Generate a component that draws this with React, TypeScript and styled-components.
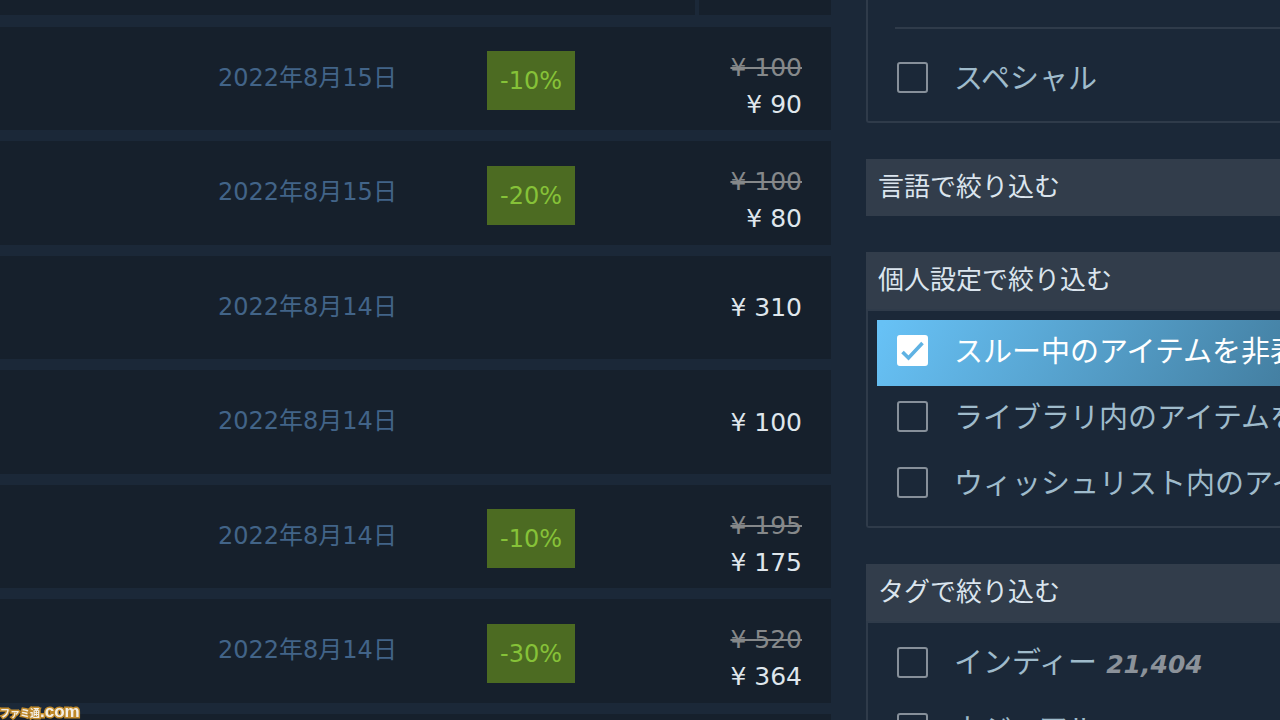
import React from 'react';
import styled, { createGlobalStyle } from 'styled-components';

const GlobalStyle = createGlobalStyle`
  *, *::before, *::after { box-sizing: border-box; }
  body {
    margin: 0;
    background: #1b2838;
    font-family: "DejaVu Sans", "Noto Sans CJK JP", sans-serif;
  }
`;

const Page = styled.div`
  display: flex;
  gap: 35px;
  height: 100vh;
  overflow: hidden;
`;

const Results = styled.main`
  flex: 1;
  min-width: 0;
`;

const Toolbar = styled.div`
  display: flex;
  gap: 4px;
  height: 15px;
  margin-bottom: 12px;
`;

const ToolbarPart = styled.div<{ $narrow?: boolean }>`
  flex: ${(p) => (p.$narrow ? '0 0 132px' : '1')};
  background: #16202c;
`;

const ResultList = styled.ul`
  display: flex;
  flex-direction: column;
  gap: 11px;
  margin: 0;
  padding: 0;
  list-style: none;
`;

const ResultRow = styled.a`
  display: grid;
  grid-template-columns: 218fr 269px 88px 227fr;
  align-items: center;
  min-height: 103px;
  padding-right: 29px;
  background: #16202c;
  text-decoration: none;

  li:nth-child(even) > & { min-height: 104px; }
`;

const ReleaseDate = styled.time`
  grid-column: 2;
  padding-bottom: 2px;
  color: #426488;
  font-size: 24px;
  line-height: 32px;
  white-space: nowrap;
`;

const Discount = styled.span`
  grid-column: 3;
  margin-top: 4px;
  padding-top: 2px;
  background: #4c6b22;
  color: #86c238;
  font-size: 24px;
  line-height: 57px;
  text-align: center;
`;

const Prices = styled.div<{ $discounted: boolean }>`
  grid-column: 4;
  display: flex;
  flex-direction: column;
  padding-top: ${(p) => (p.$discounted ? '14px' : '0')};
  font-size: 25px;
  line-height: 37px;
  text-align: right;
  white-space: nowrap;
`;

const OldPrice = styled.s`
  color: #85888a;
  text-decoration-thickness: 2px;
`;

const Price = styled.span`
  color: #dfe6ec;
`;

const Sidebar = styled.aside`
  flex: 0 0 414px;
  min-width: 0;
  overflow: hidden;
`;

const FilterGroup = styled.section`
  margin-bottom: 36px;
`;

const FilterTitle = styled.h2`
  margin: 0;
  padding: 0 12px;
  background: #323d4b;
  color: #dbe5ee;
  font-size: 26px;
  font-weight: 400;
  line-height: 57px;
  white-space: nowrap;
`;

const FilterBody = styled.div<{ $continued?: boolean }>`
  padding: ${(p) => (p.$continued ? '27px 0 8px 9px' : '9px 0 8px 9px')};
  border: 2px solid #2f3b4a;
  border-right: 0;
  border-top-width: ${(p) => (p.$continued ? '0' : '2px')};
  border-bottom-left-radius: 3px;
`;

const Divider = styled.hr`
  height: 2px;
  margin: 0 0 18px 18px;
  border: 0;
  background: #2f3b4a;
`;

const Option = styled.label<{ $active: boolean }>`
  display: flex;
  align-items: center;
  gap: 26px;
  height: 66px;
  padding: 0 0 6px 20px;
  background: ${(p) => (p.$active ? 'linear-gradient(120deg, #67c1f5 2%, #417a9b 108%)' : 'none')};
  color: ${(p) => (p.$active ? '#ffffff' : '#9fbbcb')};
  font-size: 29px;
  line-height: 40px;
  white-space: nowrap;
`;

const OptionText = styled.span`
  padding-top: 4px;
`;

const CheckHolder = styled.span`
  position: relative;
  flex: none;
  width: 31px;
  height: 31px;
`;

const CheckInput = styled.input`
  display: block;
  width: 31px;
  height: 31px;
  margin: 0;
  appearance: none;
  border: 2px solid #87909a;
  border-radius: 3px;

  &:checked {
    border-color: #ffffff;
    background: #ffffff;
  }
`;

const Tick = styled.svg`
  position: absolute;
  inset: 0;
  pointer-events: none;
`;

const Count = styled.em`
  color: #8b929a;
  font-size: 25px;
  font-weight: 700;
`;

const Watermark = styled.div`
  position: fixed;
  bottom: 0;
  left: 0;
  display: flex;
  align-items: baseline;
  height: 17px;
  color: #f3efe6;
  font-family: "Liberation Sans", "Noto Sans CJK JP", sans-serif;
  font-weight: 700;
  line-height: 18px;
  -webkit-text-stroke: 3px #c08a2c;
  paint-order: stroke fill;
`;

const WatermarkPart = styled.span<{ $size: number }>`
  font-size: ${(p) => p.$size}px;
`;

type Item = { date: string; iso: string; discount?: string; old?: string; price?: string };

const items: Item[] = [
  { date: '2022年8月15日', iso: '2022-08-15', discount: '-10%', old: '¥ 100', price: '¥ 90' },
  { date: '2022年8月15日', iso: '2022-08-15', discount: '-20%', old: '¥ 100', price: '¥ 80' },
  { date: '2022年8月14日', iso: '2022-08-14', price: '¥ 310' },
  { date: '2022年8月14日', iso: '2022-08-14', price: '¥ 100' },
  { date: '2022年8月14日', iso: '2022-08-14', discount: '-10%', old: '¥ 195', price: '¥ 175' },
  { date: '2022年8月14日', iso: '2022-08-14', discount: '-30%', old: '¥ 520', price: '¥ 364' },
];

function CheckOption({ text, count, checked = false }: { text: string; count?: string; checked?: boolean }) {
  const [on, setOn] = React.useState(checked);
  return (
    <Option $active={on}>
      <CheckHolder>
        <CheckInput type="checkbox" checked={on} onChange={(e) => setOn(e.target.checked)} />
        {on && (
          <Tick viewBox="0 0 31 31" width="31" height="31" aria-hidden="true">
            <path d="M5.5 17 L11.5 23 L25.5 8" fill="none" stroke="#5fb2e3" strokeWidth="3.6" />
          </Tick>
        )}
      </CheckHolder>
      <OptionText>
        {text}
        {count && <> <Count>{count}</Count></>}
      </OptionText>
    </Option>
  );
}

export default function App() {
  return (
    <>
      <GlobalStyle />
      <Page lang="ja">
        <Results>
          <Toolbar>
            <ToolbarPart />
            <ToolbarPart $narrow />
          </Toolbar>
          <ResultList>
            {items.map((item, i) => (
              <li key={i}>
                <ResultRow href="#">
                  <ReleaseDate dateTime={item.iso}>{item.date}</ReleaseDate>
                  {item.discount && <Discount>{item.discount}</Discount>}
                  <Prices $discounted={Boolean(item.discount)}>
                    {item.old && <OldPrice>{item.old}</OldPrice>}
                    <Price>{item.price}</Price>
                  </Prices>
                </ResultRow>
              </li>
            ))}
            <li>
              <ResultRow href="#" />
            </li>
          </ResultList>
        </Results>
        <Sidebar>
          <FilterGroup>
            <FilterBody $continued>
              <Divider />
              <CheckOption text="スペシャル" />
            </FilterBody>
          </FilterGroup>
          <FilterGroup>
            <FilterTitle>言語で絞り込む</FilterTitle>
          </FilterGroup>
          <FilterGroup>
            <FilterTitle>個人設定で絞り込む</FilterTitle>
            <FilterBody>
              <CheckOption text="スルー中のアイテムを非表示" checked />
              <CheckOption text="ライブラリ内のアイテムを非表示" />
              <CheckOption text="ウィッシュリスト内のアイテムを非表示" />
            </FilterBody>
          </FilterGroup>
          <FilterGroup>
            <FilterTitle>タグで絞り込む</FilterTitle>
            <FilterBody>
              <CheckOption text="インディー" count="21,404" />
              <CheckOption text="カジュアル" />
            </FilterBody>
          </FilterGroup>
        </Sidebar>
      </Page>
      <Watermark>
        <WatermarkPart $size={10}>ファミ通</WatermarkPart>
        <WatermarkPart $size={17}>.com</WatermarkPart>
      </Watermark>
    </>
  );
}
